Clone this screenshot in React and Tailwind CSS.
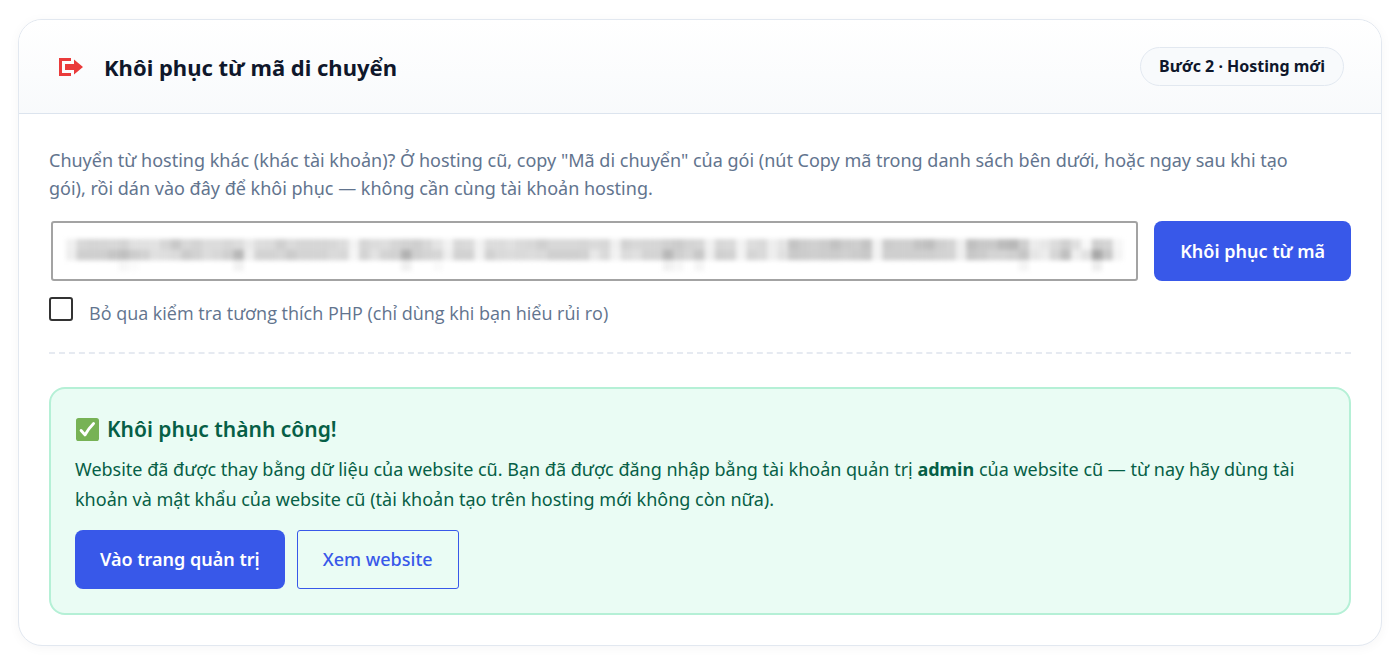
import { useState } from "react";

// Redacted code preview: one grey level per cell, two main rows and a faint third one
const TOP_ROW =
  "f0 d8 d5 d6 d8 d4 e0 e1 e2 d6 c9 d8 d4 dc dc d8 dc ea dd dc d0 da d6 d6 d6 d8 dd f3 d6 dc de d6 d2 cf d8 e4 f2 d8 da f2 dc dc e0 da d8 d0 d8 d8 d8 d6 da d8 f0 d3 d8 d6 d6 d0 cc d4 d6 f0 d8 da f2 dd da ee e4 c4 cc d0 cc c2 cc ce c4 f2 cc cf cf c4 bf cf d4 ee c0 c8 c9 bc b8 cf ec e8 dc d0 e0 f8 cf d4 f6".split(" ");
const MIDDLE_ROW =
  "ee cf cf cf c6 c0 cc d2 e0 de db cc d2 dc d8 d0 b8 ee d3 d3 d6 cc d4 d4 d4 da d8 f5 d4 e2 d4 d2 b2 cf d4 d6 ee d2 d2 f2 d2 da dc da dc da d0 d0 d0 d2 e8 da f2 dc e0 d4 d4 b8 cf d6 c8 ee d0 d2 f2 d5 da ee e0 ca cc cf cd cc d0 cc c8 f2 cf cf cf cf cf d2 d4 ee c8 cc d4 d4 d0 c6 e6 ec d6 c0 ee e2 a8 c8 f4".split(" ");
const BOTTOM_ROW = { 5: "f7", 6: "fb", 16: "f2", 32: "f0", 35: "fa", 57: "f1", 58: "f7", 60: "f5", 91: "f5", 98: "ee" };

const CodeMosaic = () => (
  <svg
    className="pointer-events-none absolute left-[15px] top-[18px] h-8 w-[calc(100%-30px)] blur-[2px]"
    viewBox="0 0 101 3"
    preserveAspectRatio="none"
    aria-hidden="true"
  >
    {TOP_ROW.map((v, i) => (
      <rect key={`t${i}`} x={i} y="0" width="1.05" height="1.05" fill={`#${v}${v}${v}`} />
    ))}
    {MIDDLE_ROW.map((v, i) => (
      <rect key={`m${i}`} x={i} y="1" width="1.05" height="1" fill={`#${v}${v}${v}`} />
    ))}
    {Object.entries(BOTTOM_ROW).map(([i, v]) => (
      <rect key={`b${i}`} x={i} y="2" width="1" height="1" fill={`#${v}${v}${v}`} />
    ))}
  </svg>
);

const MigrateIcon = () => (
  <svg className="size-[30px] shrink-0" viewBox="0 0 20 20" fill="#ea3b3b" aria-hidden="true">
    <path d="M4 6h6V4H2v12.01h8V14H4V6zm2 2h6V5l6 5-6 5v-3H6V8z" />
  </svg>
);

const CheckMark = () => (
  <svg className="ml-px size-[23px] shrink-0" viewBox="0 0 36 36" aria-hidden="true">
    <rect width="36" height="36" rx="4" fill="#77b255" />
    <path
      d="M8 19.5 L14 26.5 Q20 16 27.5 8.5"
      fill="none"
      stroke="#fff"
      strokeWidth="4.5"
      strokeLinecap="round"
      strokeLinejoin="round"
    />
  </svg>
);

const App = () => {
  const [code, setCode] = useState("");
  const [skipCheck, setSkipCheck] = useState(false);

  return (
    <main className="bg-white px-[18px] py-[19px] font-['Noto_Sans','Open_Sans',sans-serif] text-[18px]">
      <section className="overflow-hidden rounded-3xl border border-slate-200 bg-white shadow-[0_2px_12px_rgba(15,23,42,0.04)]">
        <header className="flex items-center justify-between border-b border-[#dce4ee] bg-linear-to-b from-white to-slate-50 px-[37px] py-[27px]">
          <div className="flex items-center gap-[18px]">
            <MigrateIcon />
            <h2 className="text-[22px] leading-[30px] font-bold text-slate-900">
              Khôi phục từ mã di chuyển
            </h2>
          </div>
          <span className="rounded-full border border-slate-200 bg-slate-50 px-[18px] py-[6px] text-[16px] leading-[25px] font-bold text-slate-900">
            Bước 2 · Hosting mới
          </span>
        </header>

        <div className="px-[30px] pt-8 pb-[30px]">
          <p className="pr-6 leading-7 text-slate-500">
            Chuyển từ hosting khác (khác tài khoản)? Ở hosting cũ, copy "Mã di chuyển" của gói
            (nút Copy mã trong danh sách bên dưới, hoặc ngay sau khi tạo gói), rồi dán vào đây để
            khôi phục — không cần cùng tài khoản hosting.
          </p>

          <form className="mt-[19px]" onSubmit={(e) => e.preventDefault()}>
            <div className="flex gap-4">
              <div className="relative ml-0.5 flex-1">
                <input
                  type="text"
                  aria-label="Mã di chuyển"
                  value={code}
                  onChange={(e) => setCode(e.target.value)}
                  className="block h-[60px] w-full rounded-[3px] border-2 border-[#a3a3a3] bg-white px-4 outline-none"
                />
                {!code && <CodeMosaic />}
              </div>
              <button
                type="submit"
                className="h-[60px] rounded-lg bg-[#3858e9] px-[26px] font-semibold text-white"
              >
                Khôi phục từ mã
              </button>
            </div>

            <label className="mt-4 flex items-start gap-4 font-['Open_Sans',sans-serif] leading-8 text-slate-500">
              <input
                type="checkbox"
                checked={skipCheck}
                onChange={(e) => setSkipCheck(e.target.checked)}
                className="size-6 shrink-0 appearance-none rounded-[3px] border-2 border-[#333] bg-white checked:bg-[#3858e9]"
              />
              Bỏ qua kiểm tra tương thích PHP (chỉ dùng khi bạn hiểu rủi ro)
            </label>
          </form>

          <hr className="mt-[23px] border-t-2 border-dashed border-[#e6eaf1]" />

          <div className="mt-[33px] rounded-2xl border-2 border-[#b5f0d6] bg-[#eafcf4] p-6 text-[#065f46]">
            <h3 className="flex items-center gap-2 text-[21px] leading-8 font-semibold">
              <CheckMark />
              Khôi phục thành công!
            </h3>
            <p className="mt-[9px] leading-[30px]">
              Website đã được thay bằng dữ liệu của website cũ. Bạn đã được đăng nhập bằng tài
              khoản quản trị <strong className="font-bold">admin</strong> của website cũ — từ nay
              hãy dùng tài khoản và mật khẩu của website cũ (tài khoản tạo trên hosting mới không
              còn nữa).
            </p>
            <div className="mt-4 flex gap-3">
              <a
                href="#admin"
                className="rounded-lg bg-[#3858e9] px-[25px] leading-[59px] font-semibold text-white"
              >
                Vào trang quản trị
              </a>
              <a
                href="#site"
                className="rounded-[3px] border border-[#3858e9] px-[25px] leading-[57px] font-medium text-[#3858e9]"
              >
                Xem website
              </a>
            </div>
          </div>
        </div>
      </section>
    </main>
  );
};

export default App;
